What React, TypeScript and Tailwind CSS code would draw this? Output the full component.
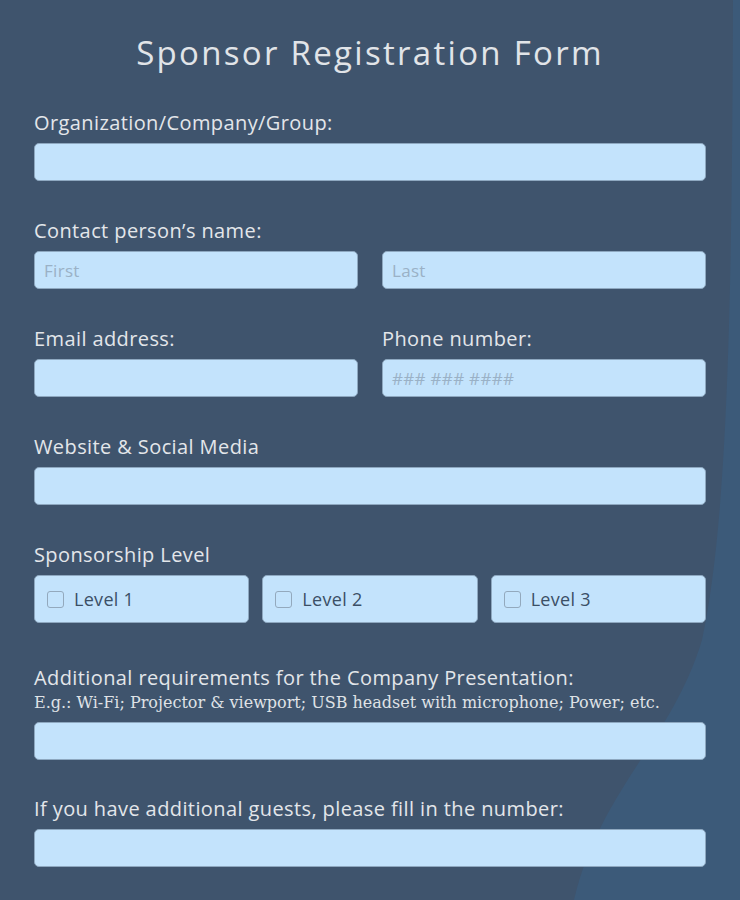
import React from "react";

const label = "block text-[20px] leading-6 tracking-[0.4px] text-[#e3e6ea] mb-2";
const input =
  "block w-full h-[38px] rounded-[5px] border border-[#8ea8c0] bg-[#c3e3fc] px-[9px] text-[17px] tracking-[0.3px] text-[#2f4258] placeholder:text-[#9ab1c6] outline-none";

function Field({ title, children }: { title: string; children: React.ReactNode }) {
  return (
    <div>
      <label className={label}>{title}</label>
      {children}
    </div>
  );
}

function LevelBox({ name }: { name: string }) {
  return (
    <label className="flex items-center h-12 rounded-[5px] border border-[#8ea8c0] bg-[#c3e3fc] pl-[12px]">
      <span className="w-[17px] h-[17px] rounded-[3px] border border-[#93a9bd] bg-[#c3e3fc]" />
      <span className="ml-[10px] text-[18px] tracking-[0.3px] text-[#3b4f66]">{name}</span>
    </label>
  );
}

export default function App() {
  return (
    <div
      className="relative w-[740px] h-[900px] overflow-hidden bg-[#3f546d]"
      style={{ fontFamily: '"Open Sans", "Noto Sans", sans-serif' }}
    >
      {/* lighter curved panel on the right */}
      <svg className="absolute inset-0" width="740" height="900" viewBox="0 0 740 900">
        <path d="M733 0 C 732 300, 728 520, 702 640 C 672 740, 600 790, 574 900 L 740 900 L 740 0 Z" fill="#3c5a79" />
      </svg>

      <div className="relative px-[34px] pt-[30px]">
        <h1 className="text-center text-[33px] leading-[46px] font-normal tracking-[2.3px] text-[#e1e4e8] mb-[35px]">
          Sponsor Registration Form
        </h1>

        <div className="flex flex-col gap-[38px]">
          <Field title="Organization/Company/Group:">
            <input className={input} />
          </Field>

          <Field title="Contact person’s name:">
            <div className="grid grid-cols-2 gap-6">
              <input className={input} placeholder="First" />
              <input className={input} placeholder="Last" />
            </div>
          </Field>

          <div className="grid grid-cols-2 gap-6">
            <Field title="Email address:">
              <input className={input} />
            </Field>
            <Field title="Phone number:">
              <input className={input} placeholder="### ### ####" />
            </Field>
          </div>

          <Field title="Website & Social Media">
            <input className={input} />
          </Field>

          <Field title="Sponsorship Level">
            <div className="grid grid-cols-3 gap-[13px]">
              <LevelBox name="Level 1" />
              <LevelBox name="Level 2" />
              <LevelBox name="Level 3" />
            </div>
          </Field>

          <div className="mt-[5px] -mb-[1px]">
            <label className="block text-[20px] leading-6 tracking-[0.4px] text-[#e3e6ea]">
              Additional requirements for the Company Presentation:
            </label>
            <p
              className="text-[16px] leading-[26px] text-[#dfe2e6] mb-[6px]"
              style={{ fontFamily: '"DejaVu Serif", serif' }}
            >
              E.g.: Wi-Fi; Projector &amp; viewport; USB headset with microphone; Power; etc.
            </p>
            <input className={input} />
          </div>

          <Field title="If you have additional guests, please fill in the number:">
            <input className={input} />
          </Field>
        </div>
      </div>
    </div>
  );
}
